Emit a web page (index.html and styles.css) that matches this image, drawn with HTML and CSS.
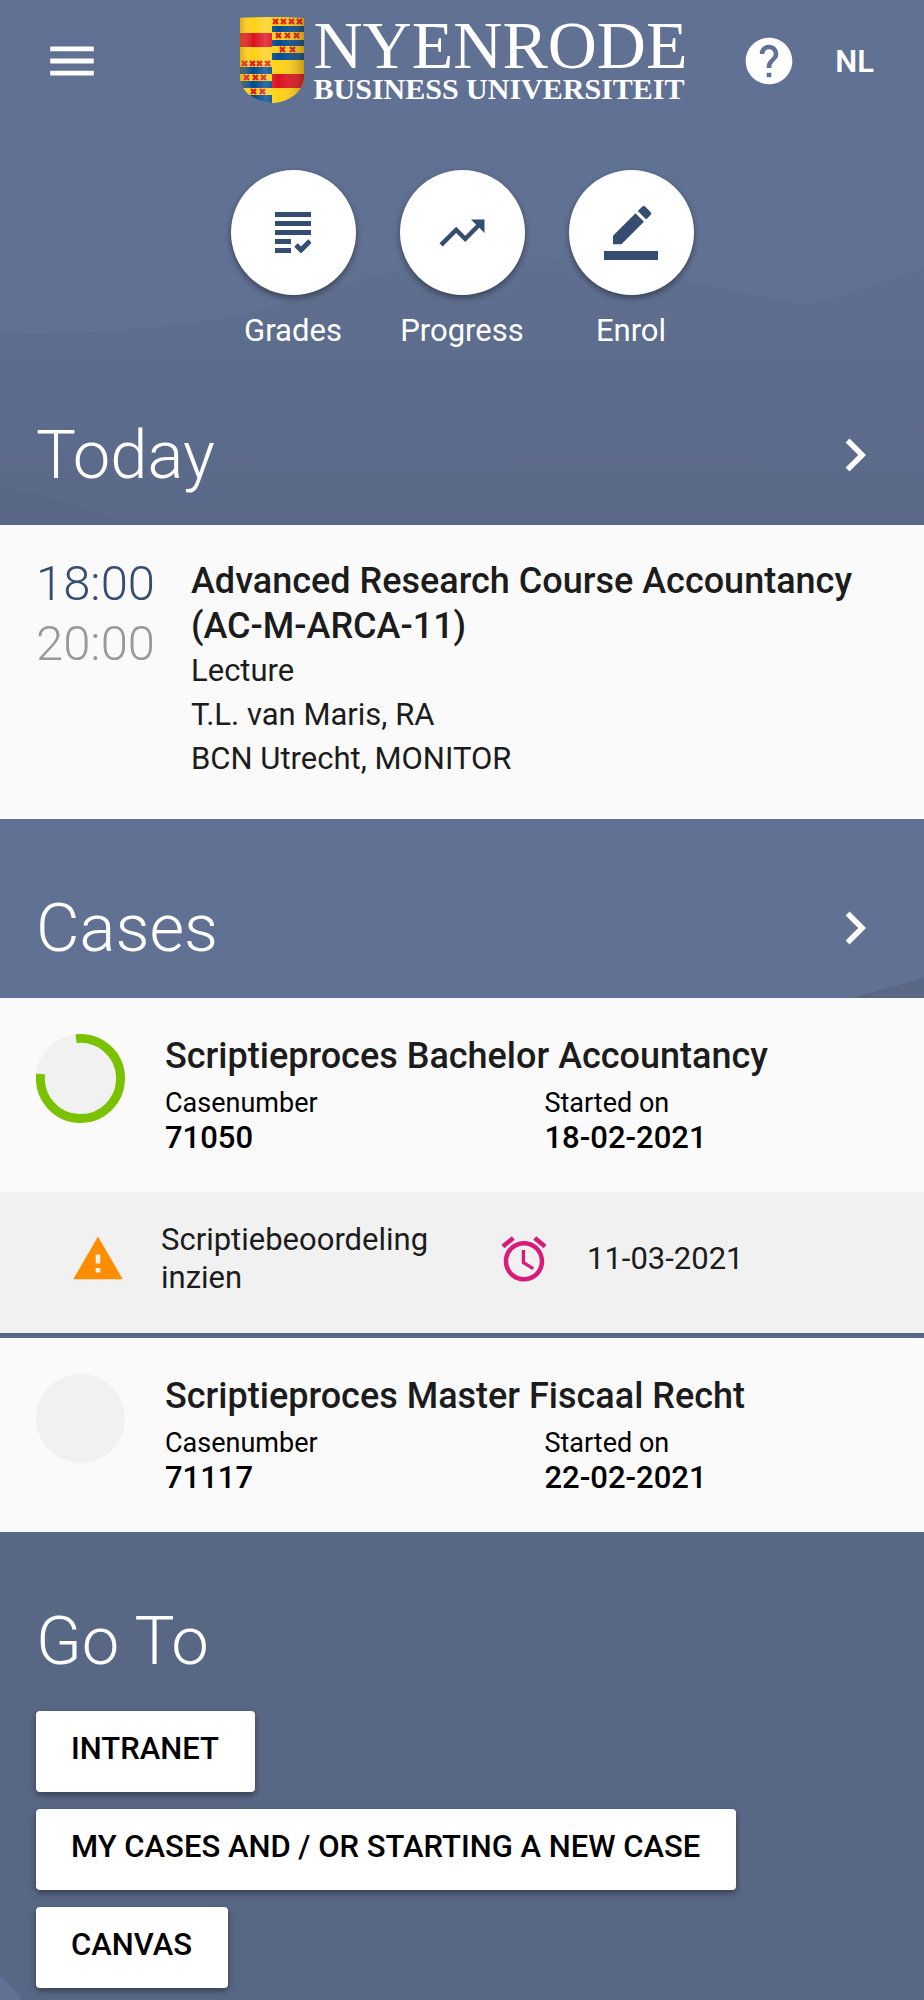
FILE: index.html
```html
<!DOCTYPE html>
<html lang="en">
<head>
<meta charset="UTF-8">
<meta name="viewport" content="width=device-width, initial-scale=1.0">
<title>Nyenrode</title>
<link rel="stylesheet" href="styles.css">
</head>
<body>
    <!-- Backdrop waves -->
    <svg class="backdrop" viewBox="0 0 924 2000" preserveAspectRatio="none" aria-hidden="true">
        <defs>
            <linearGradient id="wave" gradientUnits="userSpaceOnUse" x1="0" y1="257" x2="0" y2="525">
                <stop offset="0" stop-color="#5f6f90"/>
                <stop offset="1" stop-color="#5a6988"/>
            </linearGradient>
        </defs>
        <path fill="url(#wave)" d="M0 333C60 333 170 332 250 312C330 290 400 258 520 257C620 257 720 292 805 303C850 297 880 280 924 268V700H0Z"/>
        <path fill="#586785" d="M0 487C45 495 85 505 130 527V700H0Z"/>
        <path fill="#586784" d="M0 1150C300 1150 700 1040 924 978V2000H22Q12 1985 0 1976Z"/>
    </svg>

    <header class="header">
        <button class="icon-button" aria-label="Menu">
            <svg class="icon icon-menu" viewBox="0 0 24 24"><path d="M3 18h18v-2H3v2zm0-5h18v-2H3v2zm0-7v2h18V6H3z"/></svg>
        </button>
        <a class="logo" href="#">
            <svg class="shield" viewBox="0 0 64 86" aria-hidden="true">
                <defs>
                    <clipPath id="shield"><path d="M0 1Q32-1 64 1V60C64 76 46 86 32 86S0 76 0 60Z"/></clipPath>
                    <linearGradient id="gloss">
                        <stop offset="0" stop-color="#c08000" stop-opacity=".45"/>
                        <stop offset=".2" stop-color="#fff" stop-opacity="0"/>
                        <stop offset=".4" stop-color="#fff" stop-opacity=".2"/>
                        <stop offset=".6" stop-color="#fff" stop-opacity="0"/>
                        <stop offset="1" stop-color="#603000" stop-opacity=".35"/>
                    </linearGradient>
                    <path id="x" d="M0 0l5 5M5 0l-5 5" stroke="#d9141e" stroke-width="2.4"/>
                </defs>
                <g clip-path="url(#shield)">
                    <path fill="#ffd015" d="M0 0h64v86H0z"/>
                    <path fill="#dc1020" d="M0 16h32v14H0zM32 57h32v14H32z"/>
                    <path fill="#004a91" d="M32 9h32v6H32zM32 23h32v6H32zM32 36h32v7H32zM0 50h32v7H0zM0 64h32v7H0zM0 78h32v8H0z"/>
                    <use href="#x" x="33" y="2"/><use href="#x" x="41" y="2"/><use href="#x" x="49" y="2"/><use href="#x" x="57" y="2"/>
                    <use href="#x" x="36" y="16"/><use href="#x" x="45" y="16"/><use href="#x" x="54" y="16"/>
                    <use href="#x" x="40" y="30"/><use href="#x" x="50" y="30"/>
                    <use href="#x" x="2" y="44"/><use href="#x" x="10" y="44"/><use href="#x" x="17" y="44"/><use href="#x" x="25" y="44"/>
                    <use href="#x" x="4" y="58"/><use href="#x" x="13" y="58"/><use href="#x" x="21" y="58"/>
                    <use href="#x" x="11" y="72"/><use href="#x" x="20" y="72"/>
                    <path fill="url(#gloss)" d="M0 0h64v86H0z"/>
                </g>
            </svg>
            <span class="logo-text">
                <span class="logo-name">NYENRODE</span>
                <span class="logo-sub">BUSINESS UNIVERSITEIT</span>
            </span>
        </a>
        <div class="header-actions">
            <button class="icon-button" aria-label="Help">
                <svg class="icon" viewBox="0 0 24 24"><path d="M12 2C6.480 2 2 6.480 2 12s4.480 10 10 10 10-4.480 10-10S17.520 2 12 2zm1 17h-2v-2h2v2zm2.070-7.750l-.9.920C13.450 12.900 13 13.500 13 15h-2v-.5c0-1.100.45-2.100 1.170-2.830l1.240-1.260c.37-.36.59-.86.59-1.410 0-1.100-.9-2-2-2s-2 .9-2 2H8c0-2.210 1.790-4 4-4s4 1.790 4 4c0 .88-.36 1.680-.93 2.250z"/></svg>
            </button>
            <button class="language">NL</button>
        </div>
    </header>

    <nav class="shortcuts">
        <a class="shortcut" href="#">
            <span class="shortcut-circle">
                <svg class="icon-grades" viewBox="0 0 36 41"><path d="M0 0h36v5H0zM0 9h36v5H0zM0 18h36v5H0zM0 27h16v5H0zM0 36h16v5H0z"/><path class="check" d="M21 33l5 5 9-9"/></svg>
            </span>
            Grades
        </a>
        <a class="shortcut" href="#">
            <span class="shortcut-circle">
                <svg class="icon-shortcut" viewBox="0 0 24 24"><path d="M16 6l2.290 2.290-4.880 4.880-4-4L2 16.590 3.410 18l6-6 4 4 6.300-6.290L22 12V6z"/></svg>
            </span>
            Progress
        </a>
        <a class="shortcut" href="#">
            <span class="shortcut-circle">
                <svg class="icon-shortcut" viewBox="0 0 24 24"><path d="M17.750 7L14 3.250l-10 10V17h3.750l10-10zm2.960-2.960c.39-.39.39-1.020 0-1.410L18.370.29c-.39-.39-1.020-.39-1.410 0L15 2.250 18.750 6l1.960-1.960zM0 20h24v4H0z"/></svg>
            </span>
            Enrol
        </a>
    </nav>

    <section>
        <div class="section-header">
            <h2>Today</h2>
            <a href="#" aria-label="More today"><svg class="icon icon-more" viewBox="0 0 24 24"><path d="M10 6L8.590 7.410 13.170 12l-4.580 4.590L10 18l6-6z"/></svg></a>
        </div>
        <div class="event">
            <div class="event-time">
                <div class="start">18:00</div>
                <div class="end">20:00</div>
            </div>
            <div class="event-info">
                <h3>Advanced Research Course Accountancy (AC-M-ARCA-11)</h3>
                <p>Lecture</p>
                <p>T.L. van Maris, RA</p>
                <p>BCN Utrecht, MONITOR</p>
            </div>
        </div>
    </section>

    <section>
        <div class="section-header spaced">
            <h2>Cases</h2>
            <a href="#" aria-label="More cases"><svg class="icon icon-more" viewBox="0 0 24 24"><path d="M10 6L8.590 7.410 13.170 12l-4.580 4.590L10 18l6-6z"/></svg></a>
        </div>
        <div class="case">
            <svg class="progress" viewBox="0 0 90 90" aria-hidden="true">
                <circle cx="45" cy="45" r="45" fill="#f1f1f1"/>
                <path fill="none" stroke="#7ac100" stroke-width="9" d="M40.500 4.750A40.500 40.500 0 1 1 4.750 40.500"/>
            </svg>
            <div class="case-info">
                <h3>Scriptieproces Bachelor Accountancy</h3>
                <dl>
                    <div><dt>Casenumber</dt><dd>71050</dd></div>
                    <div><dt>Started on</dt><dd>18-02-2021</dd></div>
                </dl>
            </div>
        </div>
        <div class="task">
            <svg class="icon-task" viewBox="0 0 24 24"><path fill="#ff8d00" d="M1 21h22L12 2 1 21zm12-3h-2v-2h2v2zm0-4h-2v-4h2v4z"/></svg>
            <p class="task-name">Scriptiebeoordeling inzien</p>
            <svg class="icon-task" viewBox="0 0 24 24"><path fill="#d81b7a" d="M22 5.720l-4.600-3.860-1.290 1.530 4.600 3.860L22 5.720zM7.880 3.390L6.600 1.860 2 5.710l1.290 1.530 4.590-3.850zM12.500 8H11v6l4.750 2.850.75-1.230-4-2.370V8zM12 4c-4.970 0-9 4.030-9 9s4.020 9 9 9c4.970 0 9-4.030 9-9s-4.030-9-9-9zm0 16c-3.870 0-7-3.130-7-7s3.130-7 7-7 7 3.130 7 7-3.130 7-7 7z"/></svg>
            <p class="task-date">11-03-2021</p>
        </div>
        <div class="case">
            <svg class="progress" viewBox="0 0 90 90" aria-hidden="true">
                <circle cx="45" cy="45" r="45" fill="#f1f1f1"/>
            </svg>
            <div class="case-info">
                <h3>Scriptieproces Master Fiscaal Recht</h3>
                <dl>
                    <div><dt>Casenumber</dt><dd>71117</dd></div>
                    <div><dt>Started on</dt><dd>22-02-2021</dd></div>
                </dl>
            </div>
        </div>
    </section>

    <section>
        <div class="section-header spaced">
            <h2>Go To</h2>
        </div>
        <div class="links">
            <button>INTRANET</button>
            <button>MY CASES AND / OR STARTING A NEW CASE</button>
            <button>CANVAS</button>
        </div>
    </section>
</body>
</html>
```
FILE: styles.css
```css
* {
    box-sizing: border-box;
}

body {
    margin: 0;
    position: relative;
    min-height: 100vh;
    background-color: #617193;
    font-family: Roboto, sans-serif;
    font-size: 31px;
    color: #1c1c1c;
}

h2, h3, p, dl, dd {
    margin: 0;
}

button {
    border: 0;
    font: inherit;
    cursor: pointer;
}

a {
    color: inherit;
    text-decoration: none;
}

svg {
    display: block;
    flex-shrink: 0;
}

.backdrop {
    position: absolute;
    top: 0;
    left: 0;
    width: 100%;
    height: 100%;
    z-index: -1;
}

.icon {
    width: 56px;
    height: 56px;
    fill: #fff;
}

.icon-menu {
    width: 58px;
    height: 58px;
}

.icon-more {
    width: 66px;
    height: 66px;
}

/* Header */
.header {
    display: grid;
    grid-template-columns: 1fr auto 1fr;
    align-items: center;
    height: 122px;
    padding: 0 46px 0 43px;
    color: #fff;
}

.icon-button {
    padding: 0;
    background: none;
    justify-self: start;
}

.logo {
    display: flex;
    gap: 10px;
    margin-left: 6px;
}

.shield {
    width: 64px;
    height: 86px;
}

.logo-text {
    display: flex;
    flex-direction: column;
    font-family: "Liberation Serif", serif;
    white-space: nowrap;
}

.logo-name {
    font-size: 68px;
    line-height: 56px;
}

.logo-sub {
    font-size: 30px;
    font-weight: bold;
    line-height: 32px;
}

.header-actions {
    display: flex;
    justify-content: flex-end;
    align-items: center;
    gap: 34px;
}

.language {
    padding: 0 4px;
    background: none;
    color: #fff;
    font-weight: 600;
}

/* Round shortcuts */
.shortcuts {
    display: flex;
    justify-content: center;
    gap: 44px;
    padding-top: 48px;
}

.shortcut {
    display: flex;
    flex-direction: column;
    align-items: center;
    gap: 18px;
    width: 125px;
    color: #fff;
    line-height: 36px;
}

.shortcut-circle {
    display: flex;
    justify-content: center;
    align-items: center;
    width: 125px;
    height: 125px;
    border-radius: 50%;
    background-color: #fff;
    box-shadow: 0 3px 6px rgba(0, 0, 0, 0.4);
    fill: #364d72;
}

.icon-shortcut {
    width: 54px;
    height: 54px;
}

.icon-grades {
    width: 36px;
    height: 41px;
}

.check {
    fill: none;
    stroke: #364d72;
    stroke-width: 5;
}

/* Sections */
.section-header {
    display: flex;
    justify-content: space-between;
    align-items: center;
    height: 176px;
    padding: 36px 36px 0;
    color: #fff;
}

.section-header.spaced {
    height: 179px;
    padding-top: 39px;
}

h2 {
    font-size: 67px;
    font-weight: 300;
    line-height: 78px;
}

h3 {
    font-size: 36px;
    font-weight: 500;
    line-height: 45px;
}

.event {
    display: flex;
    gap: 36px;
    padding: 29px 36px 38px;
    background-color: #fafafa;
    line-height: 44px;
}

.event-time {
    width: 119px;
    font-size: 49px;
    font-weight: 300;
    line-height: 60px;
}

.start {
    color: #364d72;
}

.end {
    color: #999;
}

.event-info {
    flex: 1;
    padding-top: 5px;
}

.case {
    display: flex;
    gap: 40px;
    min-height: 194px;
    padding: 36px 0 34px 36px;
    background-color: #fafafa;
}

.progress {
    width: 89px;
    height: 89px;
}

.case-info {
    flex: 1;
}

.case-info dl {
    display: grid;
    grid-template-columns: 1fr 1fr;
    margin-top: 7px;
    color: #000;
}

dt {
    font-size: 27px;
    line-height: 34px;
}

dd {
    font-weight: 500;
    line-height: 36px;
}

.task {
    display: flex;
    align-items: center;
    height: 141px;
    margin-bottom: 5px;
    padding: 0 71px 8px;
    background-color: #f1f1f1;
    line-height: 38px;
}

.task-name {
    width: 300px;
    margin: 0 36px;
}

.task-date {
    margin-left: 36px;
}

.icon-task {
    width: 54px;
    height: 54px;
}

/* Link buttons */
.links {
    display: flex;
    flex-direction: column;
    align-items: flex-start;
    gap: 17px;
    padding: 0 36px 12px;
}

.links button {
    padding: 20px 36px 25px 35px;
    border-radius: 4px;
    background-color: #fff;
    box-shadow: 0 3px 6px rgba(0, 0, 0, 0.4);
    color: #000;
    font-weight: 500;
    line-height: 36px;
}
```
